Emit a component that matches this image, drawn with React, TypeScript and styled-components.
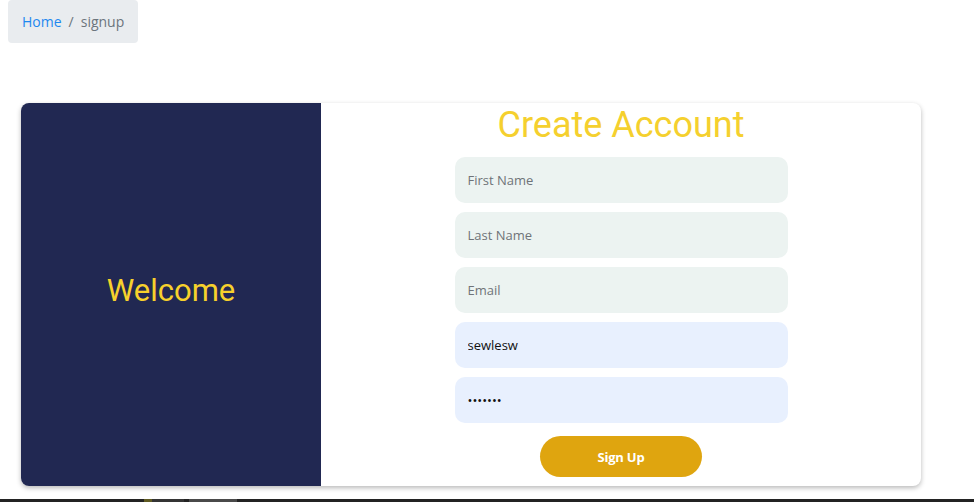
import React from "react";
import styled, { createGlobalStyle } from "styled-components";

const Global = createGlobalStyle`
  html, body { margin: 0; padding: 0; background: #fff; }
  body { font-family: "Open Sans", "Noto Sans", sans-serif; overflow: hidden; }
  * { box-sizing: border-box; }
`;

const Page = styled.div`
  width: 974px;
  height: 502px;
  display: flex;
  flex-direction: column;
  padding: 0 8px;
  & > * { flex-shrink: 0; }
`;

const Breadcrumb = styled.nav`
  width: 130px;
  height: 43px;
  background: #e9ecef;
  border-radius: 4px;
  display: flex;
  align-items: center;
  padding-left: 14px;
  font-family: "Open Sans", "Noto Sans", sans-serif;
  font-size: 14px;
  color: #6c757d;
  gap: 7px;
`;

const Crumb = styled.a`
  color: #1e88f0;
  text-decoration: none;
`;

const Sep = styled.span`
  color: #6c757d;
`;

const Card = styled.div`
  margin: 60px 0 0 13px;
  width: 900px;
  height: 383px;
  display: flex;
  border-radius: 8px;
  background: #fff;
  box-shadow: 0 2px 5px rgba(0, 0, 0, 0.28);
  overflow: hidden;
`;

const Side = styled.div`
  width: 300px;
  background: #212852;
  display: flex;
  align-items: center;
  justify-content: center;
  padding-bottom: 8px;
`;

const Welcome = styled.h2`
  margin: 0;
  font-family: Roboto, "Liberation Sans", sans-serif;
  font-weight: 400;
  font-size: 31px;
  color: #f7d12c;
`;

const FormSide = styled.form`
  flex: 1;
  display: flex;
  flex-direction: column;
  align-items: center;
`;

const Title = styled.h1`
  margin: 0;
  height: 54px;
  line-height: 44px;
  font-family: Roboto, "Liberation Sans", sans-serif;
  font-weight: 400;
  font-size: 36px;
  color: #f5d02e;
`;

const Fields = styled.div`
  display: flex;
  flex-direction: column;
  gap: 9px;
  width: 333px;
`;

const Input = styled.input<{ $filled?: boolean }>`
  height: 46px;
  width: 100%;
  border: none;
  outline: none;
  border-radius: 10px;
  padding: 0 13px;
  font-family: "Open Sans", "Noto Sans", sans-serif;
  font-size: 13px;
  color: #111;
  background: ${(p) => (p.$filled ? "#e8f0fe" : "#ecf3f1")};
  &::placeholder { color: #6f7378; }
`;

const Button = styled.button`
  margin-top: 13px;
  width: 162px;
  height: 41px;
  border: none;
  border-radius: 21px;
  background: #dfa50f;
  color: #fff;
  font-family: "Open Sans", "Noto Sans", sans-serif;
  font-weight: 700;
  font-size: 13px;
  letter-spacing: -0.2px;
`;

const Footer = styled.footer`
  margin: 13px -8px 0;
  height: 20px;
  background: #232323;
  display: flex;
  padding-left: 144px;
`;

const Chip = styled.span<{ $w: number; $c: string }>`
  width: ${(p) => p.$w}px;
  height: 100%;
  background: ${(p) => p.$c};
`;

export default function App() {
  return (
    <>
      <Global />
      <Page>
        <Breadcrumb>
          <Crumb href="#">Home</Crumb>
          <Sep>/</Sep>
          <span>signup</span>
        </Breadcrumb>
        <Card>
          <Side>
            <Welcome>Welcome</Welcome>
          </Side>
          <FormSide onSubmit={(e) => e.preventDefault()}>
            <Title>Create Account</Title>
            <Fields>
              <Input placeholder="First Name" />
              <Input placeholder="Last Name" />
              <Input placeholder="Email" />
              <Input $filled defaultValue="sewlesw" />
              <Input $filled type="password" defaultValue="1234567" />
            </Fields>
            <Button type="submit">Sign Up</Button>
          </FormSide>
        </Card>
        <Footer>
          <Chip $w={8} $c="#5f5a22" />
          <Chip $w={32} $c="#343434" />
          <Chip $w={5} $c="#232323" />
          <Chip $w={48} $c="#4a4a4a" />
        </Footer>
      </Page>
    </>
  );
}
